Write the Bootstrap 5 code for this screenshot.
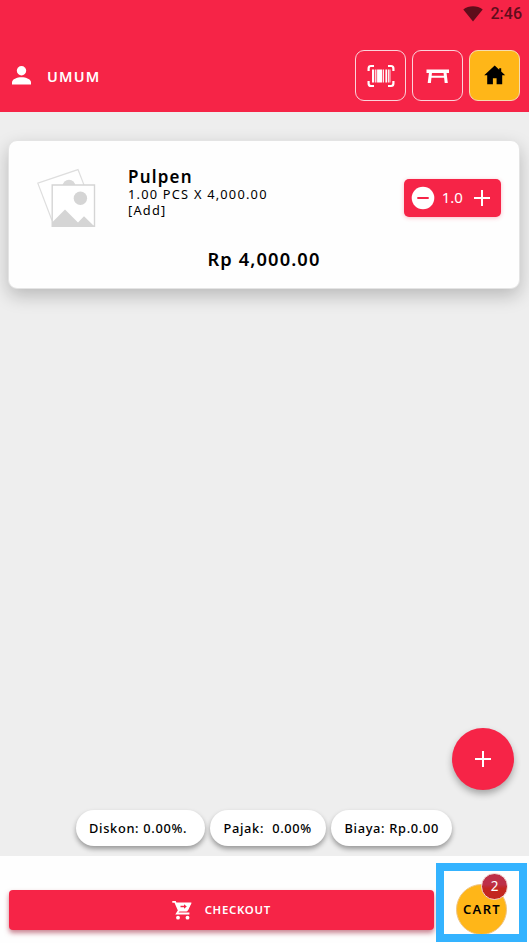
<!DOCTYPE html>
<html lang="id">
<head>
<meta charset="utf-8">
<meta name="viewport" content="width=device-width, initial-scale=1">
<title>Keranjang</title>
<link href="https://cdn.jsdelivr.net/npm/bootstrap@5.3.0/dist/css/bootstrap.min.css" rel="stylesheet">
<style>
  :root { --brand: #f62447; --amber: #ffb618; }
  body { font-family: "Noto Sans", "Open Sans", sans-serif; color: #000; background: #eee; height: 943px; overflow: hidden; line-height: 1; font-weight: 500; }
  svg { display: block; flex: none; }
  .t { white-space: pre; }
  .app-head { background: var(--brand); height: 112px; }
  .status { height: 28px; padding: 0 7px; color: #5f0d1b; font: 500 16px/28px Roboto, sans-serif; gap: 8px; }
  .tools { height: 51px; margin-top: 22px; padding: 0 9px 0 10px; }
  .tool-group { gap: 6px; }
  .tool { width: 51px; height: 51px; border: 1px solid #fbd3da; border-radius: 9px; padding: 0; color: #fff; }
  .tool-home { background: var(--amber); border-color: #f6dcb0; color: #000; }
  .user-name { font-size: 14.5px; letter-spacing: 1.2px; margin: 1px 0 0 14px; font-weight: 600; color: #fff; }
  .item { margin: 28px 9px 0 8px; height: 149px; border: 1px solid #e4e4e4; border-radius: 9px; background: #fefefe; box-shadow: 0 7px 18px rgba(0,0,0,.22); }
  .item-row { height: 93px; padding: 27px 18px 0 28px; }
  .item-text { margin: -1px 0 0 32px; }
  .item-name { font-size: 17px; letter-spacing: 1.2px; line-height: 20px; font-weight: 600; }
  .item-line { font-size: 12.8px; letter-spacing: 1.22px; line-height: 15.5px; font-weight: 400; }
  .stepper { width: 97.5px; height: 37.5px; margin-top: 11px; border-radius: 5px; background: var(--brand); color: #fff; padding: 0 9px 0 7px; box-shadow: 0 1px 4px rgba(246,36,71,.3); font-size: 15px; font-weight: 400; }
  .stepper .t { margin-left: -2px; }
  .total { font-size: 18.3px; letter-spacing: 1.1px; line-height: 24px; margin-top: 13px; font-weight: 600; }
  .fab { width: 62px; height: 62px; background: var(--brand); margin: 0 15px 20px 0; box-shadow: 0 4px 7px rgba(0,0,0,.3); color: #fff; }
  .pills { gap: 5.5px; margin: 0 0 10px 75.5px; }
  .pill { height: 36px; border-radius: 18px; padding: 1px 0 0 13.5px; background: #fff; box-shadow: 0 3px 5px rgba(0,0,0,.36); font-size: 12.8px; letter-spacing: .68px; }
  .pill-discount { width: 129px; }
  .pill-tax { width: 115.5px; }
  .pill-fee { width: 121px; }
  .app-foot { height: 87px; background: #fefefe; padding: 7px 2px 0 9px; gap: 2.5px; }
  .checkout { height: 40px; margin-top: 27px; background: var(--brand); border: 0; border-radius: 4px; color: #fff; box-shadow: 0 3px 5px rgba(150,10,35,.5); font-size: 11.4px; letter-spacing: .7px; font-weight: 600; gap: 13px; padding: 0; }
  .cart-box { width: 91px; height: 79px; border: 8px solid #34b3ff; background: #fff; overflow: hidden; }
  .cart-dot { width: 51px; height: 51px; margin: 12.5px 0 0 12px; background: var(--amber); border: 1px solid #efc483; font-size: 13px; letter-spacing: 1.35px; font-weight: 600; flex: none; }
  .cart-dot .t { margin: 1px 0 0 1px; }
  .cart-count { left: 24px; top: -12px; width: 27px; height: 27px; border: 1px solid #f1d2ce; background: linear-gradient(#bd3048 42%, #c32720 58%); color: #fff; font-size: 13.5px; font-weight: 400; letter-spacing: 0; padding-top: 1px; }
</style>
</head>
<body class="d-flex flex-column">
<header class="app-head flex-shrink-0">
  <div class="status d-flex align-items-center justify-content-end">
    <svg width="20" height="16" viewBox="0 0 20 16"><path fill="currentColor" d="M.3 3.500C5.700-.7 14.300-.7 19.700 3.500L10 15.500Z"/></svg>
    <span class="t">2:46</span>
  </div>
  <div class="tools d-flex align-items-center">
    <svg width="23" height="23" viewBox="0 0 23 23" fill="#fff"><circle cx="11.500" cy="6.700" r="4.700"/><path d="M2 20.500v-2.300c0-3 5-5 9.500-5s9.500 2 9.500 5v2.300z"/></svg>
    <span class="t user-name">UMUM</span>
    <div class="tool-group d-flex ms-auto">
      <button class="tool btn d-flex align-items-center justify-content-center" aria-label="Scan">
        <svg width="28" height="24" viewBox="0 0 28 24"><path fill="none" stroke="#fff" stroke-width="2.200" d="M1.600 7V4.500Q1.600 2 4 2H7M21 2h3q2.400 0 2.400 2.500V7M26.400 17v2.500q0 2.500-2.400 2.500h-3M7 22H4q-2.400 0-2.400-2.500V17"/><path fill="#fff" d="M5 5.500h2.200v13H5zM8.200 5.500h1.200v13H8.200zM10.100 5.500h5.200v13h-5.200zM16 5.500h.9v13H16zM18.400 5.500h1.700v13h-1.700zM20.900 5.500h1v13h-1zM22.500 5.500h.9v13h-.9z"/></svg>
      </button>
      <button class="tool btn d-flex align-items-center justify-content-center" aria-label="Meja">
        <svg width="24" height="16" viewBox="0 0 24 16"><path fill="#fff" d="M.5 1.500h22.500v3.500H.5zM3 4.500h3L4.900 15H1.700zM17.500 4.500h3l1.300 10.500h-3.100zM4.500 7.800h14.500v1.900H4.500z"/></svg>
      </button>
      <button class="tool tool-home btn d-flex align-items-center justify-content-center" aria-label="Beranda">
        <svg width="22" height="22" viewBox="0 0 22 22"><path d="M10.700.500.200 10.200h3v9h5.700v-6h3.700v6h5.600v-9h3L17.200 6.500V3.200h-2v1.600z"/></svg>
      </button>
    </div>
  </div>
</header>

<main class="flex-grow-1 d-flex flex-column">
  <section class="item">
    <div class="item-row d-flex align-items-start">
      <svg width="59" height="60" viewBox="0 0 59 60"><path fill="#fff" stroke="#dedede" stroke-width="1.200" d="M15 52.500.8 15.200 41 1.600 47 17"/><circle cx="32" cy="18" r="6.300" fill="#d9d9d9"/><path fill="#fff" stroke="#d5d5d5" stroke-width="1.400" d="M15.200 17h42.300v41.300H15.200z"/><circle cx="43.400" cy="30.200" r="6.700" fill="#d5d5d5"/><path fill="#d5d5d5" d="M15 54.500 28 41.500 41 54.500 47 48.300 57.500 58.500H15z"/></svg>
      <div class="item-text">
        <div class="t item-name">Pulpen</div>
        <div class="t item-line">1.00 PCS X 4,000.00<br>[Add]</div>
      </div>
      <div class="stepper ms-auto d-flex align-items-center justify-content-between">
        <svg width="24" height="24" viewBox="0 0 24 24"><circle cx="12" cy="12" r="11.300" fill="#fff"/><path d="M6.300 12h11.400" stroke="#f62447" stroke-width="2"/></svg>
        <span class="t">1.0</span>
        <svg width="20" height="20" viewBox="0 0 20 20"><path d="M2 10h16M10 2v16" stroke="#fff" stroke-width="2"/></svg>
      </div>
    </div>
    <div class="t total text-center">Rp 4,000.00</div>
  </section>

  <button class="fab btn rounded-circle border-0 p-0 mt-auto ms-auto d-flex align-items-center justify-content-center flex-shrink-0" aria-label="Tambah">
    <svg width="18" height="18" viewBox="0 0 18 18"><path d="M1 9h16M9 1v16" stroke="#fff" stroke-width="2"/></svg>
  </button>
  <div class="pills d-flex">
    <div class="pill pill-discount t d-flex align-items-center">Diskon: 0.00%.</div>
    <div class="pill pill-tax t d-flex align-items-center">Pajak:  0.00%</div>
    <div class="pill pill-fee t d-flex align-items-center">Biaya: Rp.0.00</div>
  </div>
</main>

<footer class="app-foot d-flex flex-shrink-0">
  <button class="checkout btn flex-grow-1 d-flex align-items-center justify-content-center">
    <svg width="20" height="20" viewBox="0 0 20 20"><path fill="none" stroke="#fff" stroke-width="1.800" d="M.3 1.900h2.800L6.800 10.500l-1.900 3h12.500"/><path fill="#fff" d="M4 3h3l2 3h7.500l1-3h2l-3.700 7.500q-.4 1-1.500 1H7z"/><path fill="#fff" d="M4 2.500h15.500L16 10H7z"/><path fill="#f62447" d="M8.500 5.700h3.500V4.200l2.800 2.300L12 8.800V7.300H8.500z"/><circle cx="6" cy="17.700" r="1.900" fill="#fff"/><circle cx="15.500" cy="17.700" r="1.900" fill="#fff"/></svg>
    <span class="t">CHECKOUT</span>
  </button>
  <div class="cart-box">
    <div class="cart-dot rounded-circle position-relative d-flex align-items-center justify-content-center">
      <span class="t">CART</span>
      <span class="cart-count position-absolute rounded-circle d-flex align-items-center justify-content-center">2</span>
    </div>
  </div>
</footer>
<script src="https://cdn.jsdelivr.net/npm/bootstrap@5.3.0/dist/js/bootstrap.bundle.min.js"></script>
</body>
</html>
